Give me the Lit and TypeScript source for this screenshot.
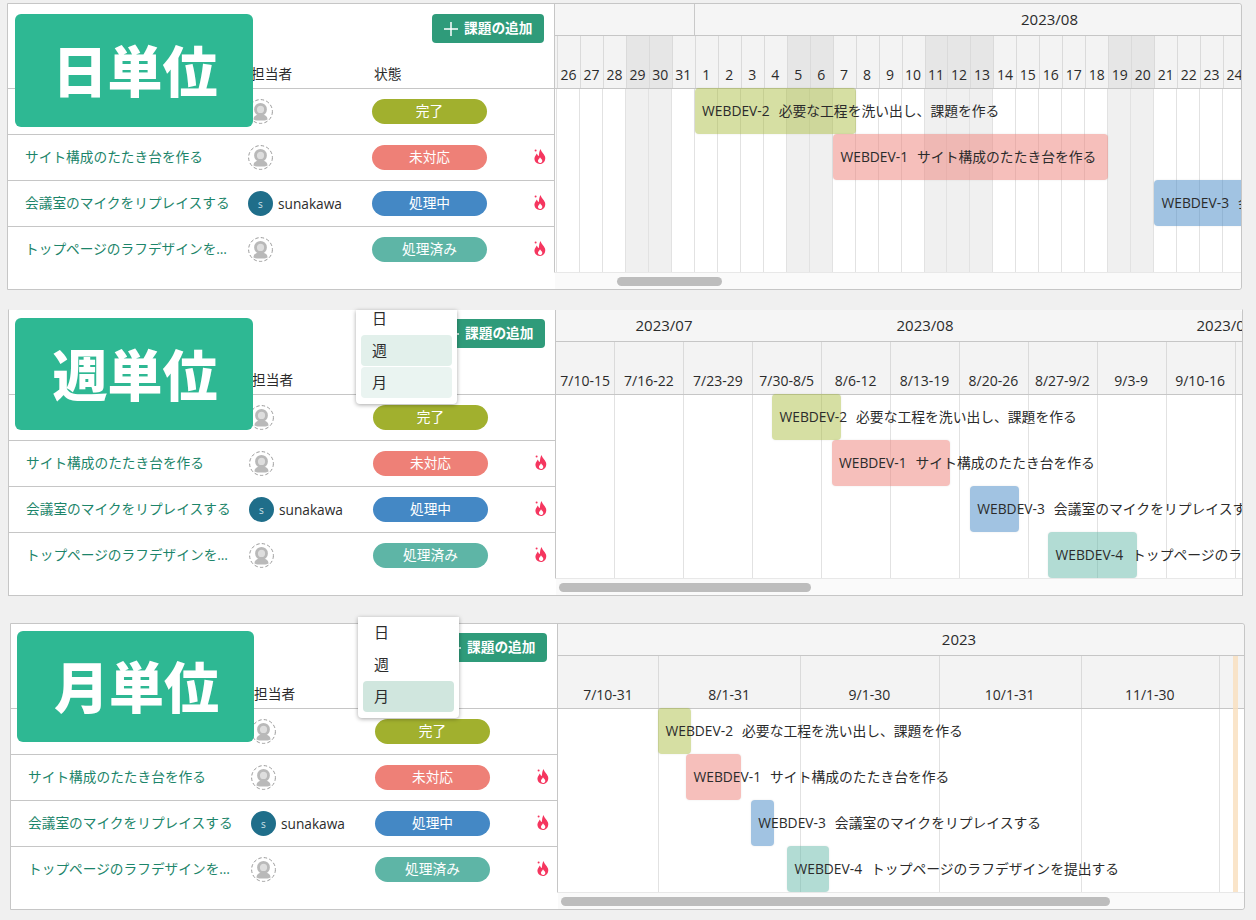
import { LitElement, html, css, svg } from "lit";
import { customElement } from "lit/decorators.js";

type Col = { label?: string; w: number; shade?: boolean; plain?: boolean };
type Month = { label?: string; w: number; line?: boolean };
type Bar = { x0: number; x1: number };
type View = {
  cls: string;
  title: string;
  origin: number;
  months: Month[];
  cols: Col[];
  bars: Bar[];
  thumb: [number, number];
  menu?: boolean;
  today?: [number, number];
};

const days: Col[] = [
  { w: 1, plain: true },
  ...[26, 27, 28, 29, 30, 31, 1, 2, 3, 4, 5, 6, 7, 8, 9, 10, 11, 12, 13, 14, 15, 16, 17, 18, 19, 20, 21, 22, 23, 24].map((d) => ({
    label: String(d),
    w: 22.97,
    shade: [29, 30, 5, 6, 11, 12, 13, 19, 20].includes(d),
  })),
];

const weeks: Col[] = [
  { label: "7/10-15", w: 58.4, plain: true },
  ...["7/16-22", "7/23-29", "7/30-8/5", "8/6-12", "8/13-19", "8/20-26", "8/27-9/2", "9/3-9", "9/10-16", ""].map((label, i) => ({
    label,
    w: i === 0 ? 69 : 68.9,
  })),
];

const VIEWS: View[] = [
  {
    cls: "p1",
    title: "日単位",
    origin: 555,
    months: [{ w: 139 }, { label: "2023/08", w: 710, line: true }],
    cols: days,
    bars: [
      { x0: 694.6, x1: 856 },
      { x0: 833, x1: 1108 },
      { x0: 1154, x1: 1400 },
      { x0: 1400, x1: 1500 },
    ],
    thumb: [617, 722],
  },
  {
    cls: "p2",
    title: "週単位",
    origin: 556,
    months: [
      { label: "2023/07", w: 216 },
      { label: "2023/08", w: 306 },
      { label: "2023/09", w: 294 },
    ],
    cols: weeks,
    bars: [
      { x0: 772, x1: 841.4 },
      { x0: 831.5, x1: 950 },
      { x0: 969.8, x1: 1019.4 },
      { x0: 1048, x1: 1137 },
    ],
    thumb: [559, 811],
    menu: true,
  },
  {
    cls: "p3",
    title: "月単位",
    origin: 558,
    months: [{ label: "2023", w: 802 }],
    cols: [
      { label: "7/10-31", w: 100, plain: true },
      { label: "8/1-31", w: 142.3 },
      { label: "9/1-30", w: 138.3 },
      { label: "10/1-31", w: 142.2 },
      { label: "11/1-30", w: 138 },
      { w: 40 },
    ],
    bars: [
      { x0: 658, x1: 691 },
      { x0: 686, x1: 741.4 },
      { x0: 750.8, x1: 773.6 },
      { x0: 787, x1: 829 },
    ],
    thumb: [561, 1110],
    menu: true,
    today: [1233, 4.5],
  },
];

const ISSUES = [
  { key: "WEBDEV-2", title: "必要な工程を洗い出し、課題を作る", status: "完了", st: "done", hot: false, user: "" },
  { key: "WEBDEV-1", title: "サイト構成のたたき台を作る", status: "未対応", st: "open", hot: true, user: "" },
  { key: "WEBDEV-3", title: "会議室のマイクをリプレイスする", status: "処理中", st: "doing", hot: true, user: "sunakawa" },
  { key: "WEBDEV-4", title: "トップページのラフデザインを提出する", status: "処理済み", st: "fixed", hot: true, user: "" },
];

const flame = svg`<path d="M6.6 1C7 4 10 5.4 11 8.4C12.1 12 9.6 16 6 16C2.6 16 0 13.6.5 10C.8 8 2 7 2.9 5.4C3.4 6.8 4 7.6 4.8 8C5.2 6 5 3 6.6 1Z" fill="#f5365f"/><path d="M6 9.2C6.6 10.6 8.5 11.2 8.3 13C8.1 14.4 7.1 15 6.1 15C4.8 15 3.8 14 4 12.6C4.2 11.1 5.5 10.6 6 9.2Z" fill="#fff"/><circle cx="1.6" cy="2.6" r="1" fill="#f5365f"/>`;

const person = svg`<circle cx="12.5" cy="12.5" r="11.9" fill="#fff" stroke="#9a9a9a" stroke-width="1" stroke-dasharray="3.4 2.2"/><path d="M5.5 20.4C5.5 16.4 9 15.4 12.5 15.4C16 15.4 19.5 16.4 19.5 20.4C17 22 8 22 5.5 20.4Z" fill="#b9b9b9"/><circle cx="12.5" cy="10.4" r="5" fill="#dedede" stroke="#b9b9b9" stroke-width="2.8"/>`;

@customElement("app-root")
export class AppRoot extends LitElement {
  static styles = css`
    :host {
      display: block;
      width: 1256px;
      height: 920px;
      overflow: hidden;
      background: #f0f0f0;
      color: #2b2b2b;
      font-family: "Open Sans", "Noto Sans CJK JP", sans-serif;
      font-size: 13.7px;
    }
    .panel {
      position: relative;
      box-sizing: border-box;
      height: 287px;
      border: 1px solid #c6c6c6;
      border-radius: 0 3px 3px 0;
      background: #fff;
      background-clip: padding-box;
      display: grid;
    }
    .p1 { margin: 3px 0 0 7px; width: 1235px; grid-template-columns: 547px 1fr; }
    .p2 { margin: 19px 0 0 8px; width: 1235px; grid-template-columns: 547px 1fr; border-top-color: transparent; border-radius: 0; }
    .p3 { margin: 27px 0 0 10px; width: 1235px; grid-template-columns: 547px 1fr; }

    .left { min-width: 0; }
    .lhead {
      box-sizing: border-box;
      height: 85px;
      border-bottom: 1px solid #c6c6c6;
      border-right: 1px solid #c6c6c6;
      padding: 10px 10px 0 0;
      display: flex;
      flex-direction: column;
    }
    .p2 .lhead, .p3 .lhead { padding-top: 9px; }
    .add {
      align-self: flex-end;
      box-sizing: border-box;
      width: 112px;
      height: 29px;
      border-radius: 4px;
      background: #2f9b7a;
      color: #fff;
      font-weight: 700;
      display: flex;
      align-items: center;
      gap: 6px;
      padding-left: 12px;
      line-height: 20px;
    }
    .add span { position: relative; top: -1px; }
    .add svg { width: 14px; height: 14px; flex: none; }
    .colnames {
      margin-top: auto;
      height: 28px;
      display: grid;
      grid-template-columns: 240px 124px 1fr;
      line-height: 28px;
    }
    .colnames span:nth-child(2) { padding-left: 3px; }
    .colnames span:nth-child(3) { padding-left: 2px; }

    .row {
      box-sizing: border-box;
      height: 46px;
      border-bottom: 1px solid #c6c6c6;
      border-right: 1px solid #c6c6c6;
      display: grid;
      grid-template-columns: 240px 124px 115px 1fr;
      align-items: center;
    }
    .row:last-child { border-bottom-color: transparent; }
    .ttl {
      padding: 0 17px 2px;
      color: #1c856a;
      line-height: 20px;
      white-space: nowrap;
      overflow: hidden;
      text-overflow: ellipsis;
    }
    .who { display: flex; align-items: center; gap: 5px; }
    .who svg { width: 25px; height: 25px; display: block; }
    .ava {
      width: 25px;
      height: 25px;
      border-radius: 50%;
      background: #1f6e8a;
      color: #cfe3ea;
      font-size: 10px;
      display: flex;
      align-items: center;
      justify-content: center;
    }
    .pill {
      height: 25px;
      border-radius: 13px;
      color: #fff;
      line-height: 23px;
      text-align: center;
    }
    .done { background: #a1b02e; }
    .open { background: #ee8077; }
    .doing { background: #4488c5; }
    .fixed { background: #5eb5a6; }
    .fire { width: 12px; height: 16px; margin: 0 0 3px 47px; display: block; }

    .time { position: relative; overflow: hidden; min-width: 0; border-radius: 0 3px 3px 0; }
    .months { display: flex; height: 32px; box-sizing: border-box; background: #f5f5f5; border-bottom: 1px solid #c6c6c6; }
    .month { flex: none; box-sizing: border-box; text-align: center; line-height: 31px; font-size: 15px; }
    .month.line { border-left: 1px solid #c9c9c9; }
    .cols { display: flex; height: 53px; box-sizing: border-box; background: #f3f3f3; border-bottom: 1px solid #c6c6c6; }
    .col {
      flex: none;
      box-sizing: border-box;
      border-left: 1px solid #dadada;
      display: flex;
      align-items: flex-end;
      justify-content: center;
      padding-bottom: 3px;
      padding-right: 1px;
      font-size: 14px;
      line-height: 20px;
      white-space: nowrap;
    }
    .col.plain { border-left-color: transparent; }
    .col.shade { background: #e6e6e6; }
    .body { position: relative; height: 184px; }
    .grid { position: absolute; inset: 0; display: flex; }
    .gcol { flex: none; box-sizing: border-box; border-left: 1px solid #e2e2e2; }
    .gcol.plain { border-left-color: transparent; }
    .gcol.shade { background: #f0f0f0; }
    .today { position: absolute; top: 32px; bottom: 17px; background: #f9dfbd; opacity: .8; }
    .lane { position: relative; height: 46px; }
    .bar {
      position: absolute;
      top: -1px;
      height: 46px;
      box-sizing: border-box;
      border-radius: 4px;
      padding-left: 7.5px;
      font-size: 13.8px;
      line-height: 46px;
      white-space: nowrap;
      box-shadow: 0 0 2px rgba(0, 0, 0, .1);
    }
    .bar b { font-weight: 400; margin-right: 9px; }
    .bar.done { background: rgba(161, 183, 46, .44); }
    .bar.open { background: rgba(238, 128, 119, .5); }
    .bar.doing { background: rgba(68, 136, 197, .5); }
    .bar.fixed { background: rgba(94, 181, 166, .48); }
    .track {
      position: relative;
      margin-top: -1px;
      height: 18px;
      box-sizing: border-box;
      background: #fafafa;
      border-top: 1px solid #e8e8e8;
      padding-top: 4px;
    }
    .thumb { height: 9px; border-radius: 5px; background: #bdbdbd; }

    .badge {
      position: absolute;
      box-sizing: border-box;
      width: 238px;
      height: 113px;
      border-radius: 6px;
      background: #2eb893;
      color: #fff;
      font-family: "Noto Sans CJK JP", sans-serif;
      font-size: 55px;
      font-weight: 900;
      display: flex;
      align-items: center;
      justify-content: center;
      padding: 0 0 5px 2px;
    }
    .p1 .badge { left: 7px; top: 10px; }
    .p2 .badge { left: 6px; top: 8px; height: 112px; }
    .p3 .badge { left: 6px; top: 7px; width: 237px; height: 111px; }

    .menu {
      position: absolute;
      box-sizing: border-box;
      width: 101px;
      background: #fff;
      border-radius: 0 0 4px 4px;
      box-shadow: 0 1px 4px rgba(0, 0, 0, .35);
      overflow: hidden;
      padding: 0 5px 6px;
      display: flex;
      flex-direction: column;
      justify-content: flex-end;
      gap: 1px;
      font-size: 15px;
    }
    .p2 .menu { left: 347px; top: 0; height: 94px; }
    .p3 .menu { left: 347px; top: -7px; height: 101px; }
    .item { flex: none; height: 31px; line-height: 31px; padding-left: 11px; border-radius: 4px; }
    .p2 .item.w { background: #e2f0eb; }
    .p2 .item.m { background: #eaf4f1; }
    .p3 .item.m { background: #d0e6de; }
  `;

  private timeline(v: View) {
    return html`<div class="time">
      <div class="months">
        ${v.months.map(
          (m) => html`<div class="month ${m.line ? "line" : ""}" style="width:${m.w}px">${m.label ?? ""}</div>`
        )}
      </div>
      <div class="cols">
        ${v.cols.map(
          (c) =>
            html`<div class="col ${c.shade ? "shade" : ""} ${c.plain ? "plain" : ""}" style="width:${c.w}px">${c.label ?? ""}</div>`
        )}
      </div>
      <div class="body">
        <div class="grid">
          ${v.cols.map(
            (c) => html`<div class="gcol ${c.shade ? "shade" : ""} ${c.plain ? "plain" : ""}" style="width:${c.w}px"></div>`
          )}
        </div>
        ${ISSUES.map((it, i) => {
          const b = v.bars[i];
          return html`<div class="lane">
            <div class="bar ${it.st}" style="left:${b.x0 - v.origin}px;width:${b.x1 - b.x0}px"><b>${it.key}</b>${it.title}</div>
          </div>`;
        })}
      </div>
      <div class="track">
        <div class="thumb" style="margin-left:${v.thumb[0] - v.origin}px;width:${v.thumb[1] - v.thumb[0]}px"></div>
      </div>
      ${v.today
        ? html`<div class="today" style="left:${v.today[0] - v.origin}px;width:${v.today[1]}px"></div>`
        : ""}
    </div>`;
  }

  private panel(v: View) {
    return html`<section class="panel ${v.cls}">
      <div class="left">
        <div class="lhead">
          <div class="add">
            <svg viewBox="0 0 14 14"><path d="M7 0v14M0 7h14" stroke="#fff" stroke-width="1.5" fill="none" /></svg>
            <span>課題の追加</span>
          </div>
          <div class="colnames"><span></span><span>担当者</span><span>状態</span></div>
        </div>
        ${ISSUES.map(
          (it) => html`<div class="row">
            <div class="ttl">${it.title}</div>
            <div class="who">
              ${it.user
                ? html`<div class="ava">s</div><span>${it.user}</span>`
                : html`<svg viewBox="0 0 25 25">${person}</svg>`}
            </div>
            <div class="pill ${it.st}">${it.status}</div>
            ${it.hot ? html`<svg class="fire" viewBox="0 0 12 16">${flame}</svg>` : ""}
          </div>`
        )}
      </div>
      ${this.timeline(v)}
      <div class="badge">${v.title}</div>
      ${v.menu
        ? html`<div class="menu">
            <div class="item d">日</div>
            <div class="item w">週</div>
            <div class="item m">月</div>
          </div>`
        : ""}
    </section>`;
  }

  render() {
    return VIEWS.map((v) => this.panel(v));
  }
}
